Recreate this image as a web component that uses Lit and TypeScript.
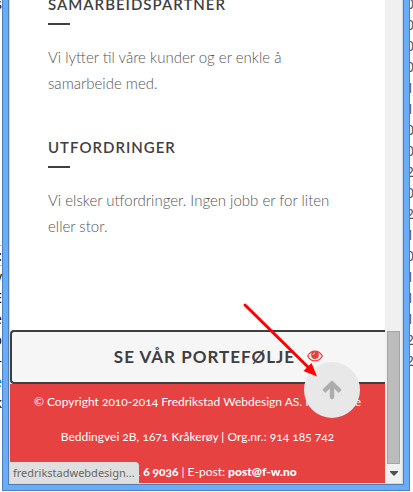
import { LitElement, html, css } from "lit";
import { customElement } from "lit/decorators.js";

@customElement("app-root")
export class AppRoot extends LitElement {
  static styles = css`
    * {
      box-sizing: border-box;
    }
    :host {
      display: block;
      background: #fff;
      font-family: Lato, "Open Sans", sans-serif;
      color: #3f3f3f;
    }
    .desktop {
      position: relative;
      display: flex;
      height: 100vh;
      overflow: hidden;
    }
    .strip {
      flex: none;
      display: flex;
      flex-direction: column;
      overflow: hidden;
      font: 14px/21px "Noto Sans", sans-serif;
    }
    .strip span {
      flex: none;
    }
    .behind-left {
      width: 2px;
      align-items: flex-end;
      padding-bottom: 79px;
      color: #111;
    }
    .behind-left span:first-child {
      margin: -7px 0 auto;
    }
    .behind-left .ruled {
      border: solid #ccc;
      border-width: 1px 0;
      line-height: 19px;
    }
    .behind-left .link {
      color: #0b6cc4;
    }
    .behind-right {
      width: 3px;
      align-items: flex-start;
      padding-bottom: 20px;
      background: #fcfcfc;
      color: #555;
    }
    .behind-right span {
      margin: -7px 0 7px -4px;
    }
    .window {
      flex: 1;
      min-width: 0;
      display: flex;
      margin-bottom: 1px;
      padding: 0 6px 6px;
      background: #6cabf5;
      border: 1px solid #4a80c0;
      border-top: 0;
    }
    .viewport {
      position: relative;
      flex: 1;
      min-width: 0;
      display: flex;
      border: 1px solid #c9dcee;
      border-top: 0;
      outline: 1px solid #4f7fb4;
      background: #fff;
    }
    .page {
      flex: 1;
      min-width: 0;
      display: flex;
      flex-direction: column;
      justify-content: flex-end;
      overflow: hidden;
    }
    .features {
      padding: 0 38px 91px;
    }
    h2 {
      margin: 0;
      font-size: 15px;
      line-height: 20px;
      font-weight: 600;
      letter-spacing: 1px;
    }
    h2::after {
      content: "";
      display: block;
      width: 22px;
      height: 2px;
      margin-top: 9px;
      background: #3f3f3f;
    }
    .features p {
      margin: 19px 0 41px;
      font-size: 15px;
      line-height: 26px;
      font-weight: 300;
      color: #555;
    }
    .features p:last-child {
      margin-bottom: 0;
    }
    .portfolio {
      display: flex;
      flex: none;
      align-items: center;
      justify-content: center;
      gap: 12px;
      height: 54px;
      padding: 0 0 2px 40px;
      border: 2px solid #3f3f3f;
      border-right: 0;
      border-radius: 4px 0 0 4px;
      background: #f6f6f6;
      color: #3f3f3f;
      font-size: 17px;
      font-weight: 700;
      letter-spacing: 1px;
      text-decoration: none;
    }
    .portfolio svg {
      display: block;
    }
    footer {
      flex: none;
      height: 99px;
      overflow: hidden;
      background: #e64242;
      color: #fff;
      font-size: 12px;
      line-height: 35px;
      text-align: center;
      font-variant-numeric: oldstyle-nums;
      white-space: nowrap;
    }
    footer p {
      margin: 0;
    }
    footer a {
      color: inherit;
      font-weight: 900;
      text-decoration: none;
    }
    .scrollbar {
      flex: none;
      width: 17px;
      display: flex;
      flex-direction: column;
      justify-content: flex-end;
      padding: 0 2px;
      background: #f0f0f0;
    }
    .thumb {
      height: 133px;
      background: #bcbcbc;
      border: 1px solid #a5a5a5;
    }
    .down {
      height: 19px;
      padding: 0;
      border: 0;
      background: none;
      display: grid;
      place-items: center;
    }
    .to-top {
      position: absolute;
      right: 42px;
      bottom: 65px;
      width: 56px;
      height: 56px;
      padding: 0;
      border: 0;
      border-radius: 50%;
      background: #e8e8e8;
      display: grid;
      place-items: center;
    }
    .status {
      position: absolute;
      left: 0;
      bottom: 0;
      height: 21px;
      padding: 0 4px 0 3px;
      border-radius: 0 4px 0 0;
      background: #dfdfdf;
      color: #666;
      font: 11px/21px "Noto Sans", sans-serif;
    }
    .pointer {
      position: absolute;
      right: 84px;
      bottom: 103px;
    }
  `;

  private leftRows = [
    { text: "s", kind: "" },
    { text: ":", kind: "ruled" },
    { text: "v", kind: "" },
    { text: "E", kind: "" },
    { text: "e", kind: "" },
    { text: "o", kind: "" },
    { text: "–", kind: "" },
    { text: "e", kind: "link" },
    { text: "k", kind: "" },
  ];
  private rightRows = [..."000011002021011122"];

  render() {
    return html`
      <div class="desktop">
        <div class="strip behind-left" aria-hidden="true">
          ${this.leftRows.map((row) => html`<span class=${row.kind}>${row.text}</span>`)}
        </div>
        <div class="window">
          <div class="viewport">
            <main class="page">
              <section class="features">
                <h2>SAMARBEIDSPARTNER</h2>
                <p>Vi lytter til våre kunder og er enkle å samarbeide med.</p>
                <h2>UTFORDRINGER</h2>
                <p>Vi elsker utfordringer. Ingen jobb er for liten eller stor.</p>
              </section>
              <a class="portfolio" href="#portfolio">
                SE VÅR PORTEFØLJE
                <svg width="16" height="12" viewBox="0 0 16 12" fill="none" stroke="#e64242">
                  <path d="M.7 6C2.5 2.700 5 1.100 8 1.100S13.500 2.700 15.300 6C13.500 9.300 11 10.900 8 10.900S2.500 9.300.7 6Z" stroke-width="1.300" />
                  <circle cx="8" cy="5" r="3.900" fill="#e64242" stroke="none" />
                  <path d="M6 5C6 3.800 6.800 3 8 3" stroke="#f6f6f6" stroke-width=".8" />
                </svg>
              </a>
              <footer>
                <p>© Copyright 2010-2014 Fredrikstad Webdesign AS. Hovedside</p>
                <p>Beddingvei 2B, 1671 Kråkerøy | Org.nr.: 914 185 742</p>
                <p>Tlf.: <a href="tel:69169036">691 6 9036</a> | E-post: <a href="mailto:post@f-w.no">post@f-w.no</a></p>
              </footer>
            </main>
            <div class="scrollbar">
              <div class="thumb"></div>
              <button class="down" aria-label="Rull ned">
                <svg width="8" height="5" viewBox="0 0 8 5"><path d="M0 0H8V1L4 5L0 1Z" fill="#505050" /></svg>
              </button>
            </div>
            <button class="to-top" aria-label="Til toppen">
              <svg width="20" height="20" viewBox="0 0 20 20" fill="none" stroke="#adadad" stroke-width="4.400">
                <path d="M10 17V4" stroke-linecap="round" />
                <path d="M1.800 11.400L10 3.200L18.200 11.400" stroke-linejoin="round" />
              </svg>
            </button>
            <div class="status">fredrikstadwebdesign...</div>
          </div>
        </div>
        <div class="strip behind-right" aria-hidden="true">
          ${this.rightRows.map((digit) => html`<span>${digit}</span>`)}
        </div>
        <svg class="pointer" width="90" height="90" viewBox="0 0 90 90" aria-hidden="true">
          <path d="M6 6L70 69" stroke="#f00" stroke-width="3" stroke-linecap="round" />
          <path d="M78 77.500L64.500 72L72.500 64Z" fill="#f00" />
        </svg>
      </div>
    `;
  }
}
